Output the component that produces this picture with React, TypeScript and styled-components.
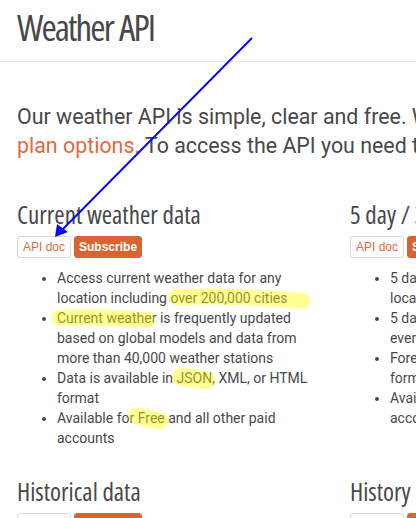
import styled, { createGlobalStyle } from 'styled-components';

const colors = {
  text: '#48484a',
  orange: '#e4693c',
  button: '#d9642f',
  border: '#d6d6d6',
  rule: '#e8e8e8',
};

const GlobalStyle = createGlobalStyle`
  html, body {
    margin: 0;
    padding: 0;
    background: #fff;
    overflow: hidden;
  }
  body {
    font-family: Roboto, 'Liberation Sans', sans-serif;
    color: ${colors.text};
  }
`;

const Page = styled.div`
  position: relative;
  width: 416px;
  height: 518px;
  overflow: hidden;
`;

const Header = styled.header`
  width: 900px;
  padding: 0 17px;
  height: 62px;
  border-bottom: 1px solid ${colors.rule};
  box-sizing: border-box;
`;

const condensed = `
  font-family: 'Open Sans', 'Liberation Sans', sans-serif;
  font-stretch: 75%;
  font-weight: 500;
`;

const Title = styled.h1`
  margin: 0;
  padding-top: 5px;
  ${condensed}
  font-size: 37px;
  line-height: 44px;
  letter-spacing: -1.9px;
  word-spacing: 1px;
  color: ${colors.text};
`;

const Content = styled.main`
  width: 900px;
  padding: 40px 17px 0;
`;

const Intro = styled.p`
  margin: 0 0 38px;
  font-size: 21.4px;
  line-height: 29px;
  white-space: nowrap;
`;

const Link = styled.span`
  color: ${colors.orange};
`;

const Grid = styled.div`
  display: grid;
  grid-template-columns: 290px 290px 290px;
  column-gap: 43px;
  row-gap: 27px;
`;

const Section = styled.section`
  display: flex;
  flex-direction: column;
`;

const SectionTitle = styled.h2`
  margin: 0 0 6px;
  ${condensed}
  font-size: 25px;
  line-height: 32px;
  white-space: nowrap;
  color: ${colors.text};
`;

const Buttons = styled.div`
  display: flex;
  gap: 3px;
`;

const Button = styled.span<{ $primary?: boolean }>`
  display: inline-flex;
  align-items: center;
  height: 22px;
  padding: 0 ${({ $primary }) => ($primary ? 4 : 5)}px;
  box-sizing: border-box;
  border-radius: 3px;
  font-family: 'Liberation Sans', Arial, sans-serif;
  font-size: 12px;
  font-weight: ${({ $primary }) => ($primary ? 700 : 400)};
  color: ${({ $primary }) => ($primary ? '#fff' : colors.orange)};
  background: ${({ $primary }) => ($primary ? colors.button : '#fff')};
  border: 1px solid ${({ $primary }) => ($primary ? colors.button : colors.border)};
`;

const List = styled.ul`
  margin: 10px 0 0;
  padding-left: 40px;
  font-size: 14px;
  line-height: 20px;
  width: 254px;
`;

const Overlay = styled.svg`
  position: absolute;
  left: 0;
  top: 0;
  pointer-events: none;
`;

type Card = {
  title: string;
  items: string[];
};

const cards: Card[] = [
  {
    title: 'Current weather data',
    items: [
      'Access current weather data for any location including over 200,000 cities',
      'Current weather is frequently updated based on global models and data from more than 40,000 weather stations',
      'Data is available in JSON, XML, or HTML format',
      'Available for Free and all other paid accounts',
    ],
  },
  {
    title: '5 day / 3 hour forecast',
    items: [
      '5 day forecast is available at any location or city',
      '5 day forecast includes weather data every 3 hours',
      'Forecast is available in JSON or XML format',
      'Available for Free and all other paid accounts',
    ],
  },
  {
    title: '16 day / daily forecast',
    items: ['16 day forecasts are available at any location or city'],
  },
  { title: 'Historical data', items: [] },
  { title: 'History bulk', items: [] },
  { title: 'Weather maps', items: [] },
];

const Highlights = () => (
  <Overlay width="416" height="518" viewBox="0 0 416 518">
    <g stroke="rgb(255,255,0)" strokeOpacity="0.42" strokeLinecap="round" fill="none">
      <path d="M176 297 Q240 295 302 301" strokeWidth="16" />
      <path d="M59 318 Q100 316 147 320" strokeWidth="16" />
      <path d="M181 377 L206 380" strokeWidth="18" />
      <path d="M137 416 L160 421" strokeWidth="17" />
    </g>
    <line x1="252" y1="38" x2="61" y2="231" stroke="#0a0aee" strokeWidth="2" />
    <polygon points="55,237 57,224 68,232" fill="#0a0aee" />
  </Overlay>
);

const App = (): JSX.Element => (
  <Page>
    <GlobalStyle />
    <Header>
      <Title>Weather API</Title>
    </Header>
    <Content>
      <Intro>
        Our weather API is simple, clear and free. We also offer higher levels of support, please see our{' '}
        <Link>paid</Link>
        <br />
        <Link>plan options.</Link> To access the API you need to sign up for an API key if you are on a free or paid plan.
      </Intro>
      <Grid>
        {cards.map((card) => (
          <Section key={card.title}>
            <SectionTitle>{card.title}</SectionTitle>
            <Buttons>
              <Button>API doc</Button>
              <Button $primary>Subscribe</Button>
            </Buttons>
            <List>
              {card.items.map((item, i) => (
                <li key={i}>{item}</li>
              ))}
            </List>
          </Section>
        ))}
      </Grid>
    </Content>
    <Highlights />
  </Page>
);

export default App;
